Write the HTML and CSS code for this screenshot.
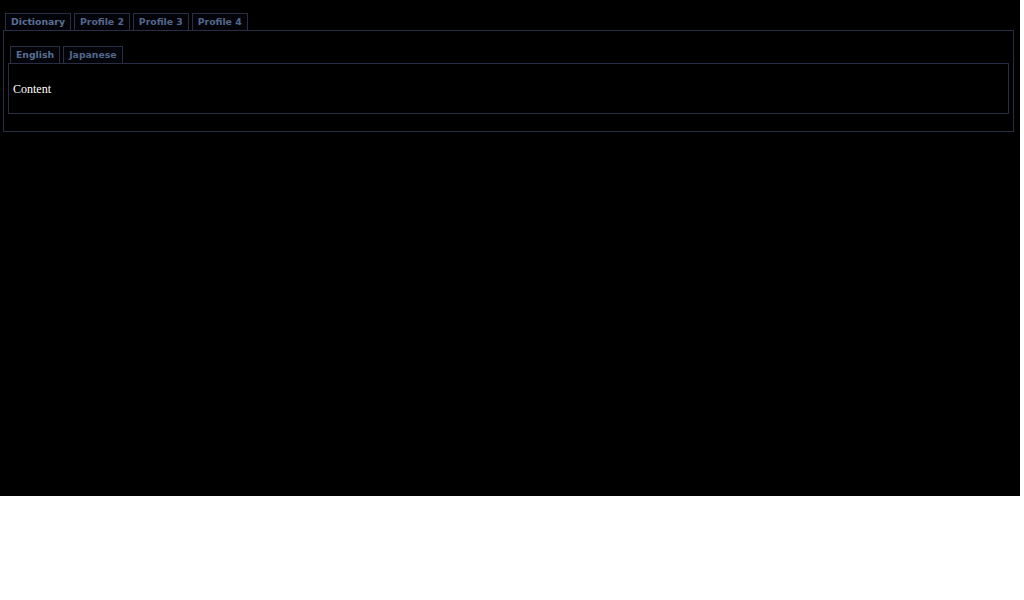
FILE: index.html
```html
<!DOCTYPE html>
<html>
<head>
<meta charset="UTF-8">
<title>Dictionary</title>
<link rel="stylesheet" href="styles.css">
</head>
<body>
<div class="screen">
  <div class="tabs">
    <span class="tab active">Dictionary</span>
    <span class="tab">Profile 2</span>
    <span class="tab">Profile 3</span>
    <span class="tab">Profile 4</span>
  </div>
  <div class="panel outer">
    <div class="tabs inner-tabs">
      <span class="tab active">English</span>
      <span class="tab">Japanese</span>
    </div>
    <div class="panel inner">
      <p class="content">Content</p>
    </div>
  </div>
</div>
</body>
</html>
```

FILE: styles.css
```css
/* dark tabbed dictionary frame */
body {
    margin: 0;
    background: #fff;
}
.screen {
    width: 1020px;
    height: 496px;
    box-sizing: border-box;
    background: #000;
    padding: 13px 6px 0 3px;
}
.tabs {
    display: flex;
    gap: 3px;
    padding-left: 2px;
}
.tab {
    display: block;
    height: 16px;
    line-height: 16px;
    padding: 0 5px;
    border: 1px solid #2a2e45;
    border-bottom: 0;
    background: #03040a;
    color: #53678a;
    font-family: "DejaVu Sans", Verdana, sans-serif;
    font-size: 9.3px;
    font-weight: bold;
}
.tab.active {
    color: #5a6e92;
}
.panel {
    border: 1px solid #2a2e45;
}
.outer {
    padding: 15px 4px 0 4px;
    box-sizing: border-box;
    height: 102px;
}
.inner {
    height: 51px;
    box-sizing: border-box;
    padding: 0 4px;
}
.content {
    margin: 18px 0 0 0;
    color: #fff;
    font-family: "Liberation Serif", "Times New Roman", serif;
    font-size: 12px;
    line-height: 14px;
}
```
